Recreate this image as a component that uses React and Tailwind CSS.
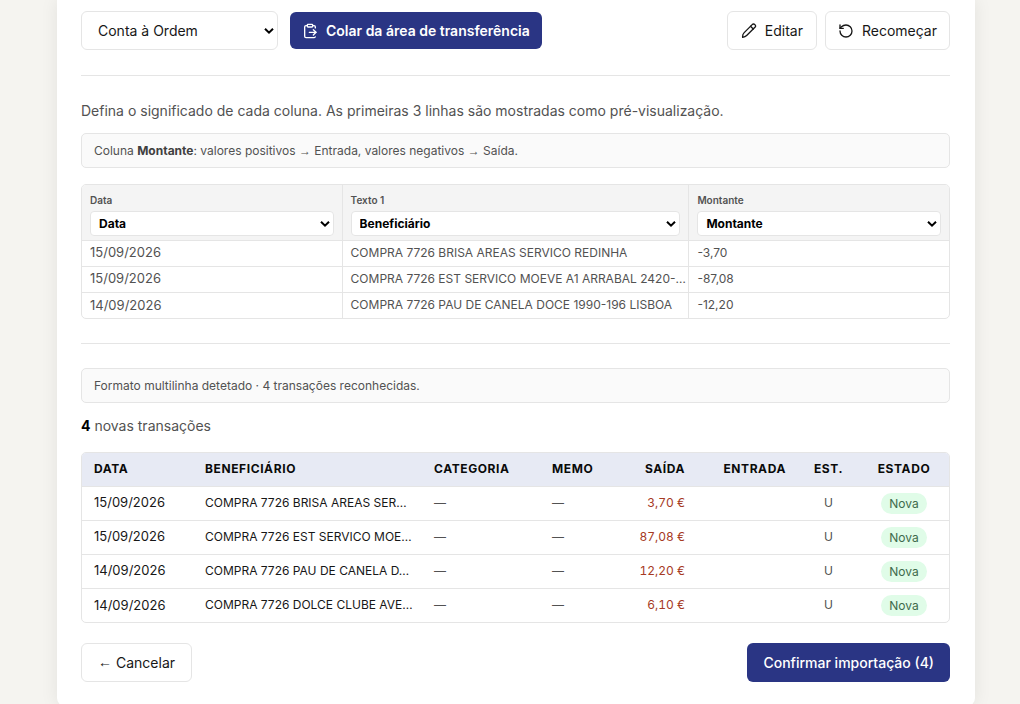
import React, { useState } from 'react';
import { ClipboardPaste, RotateCcw } from 'lucide-react';

const colunas = [
  { id: 'data', nome: 'Data', tipo: 'Data', largura: 'w-[30%]' },
  { id: 'texto1', nome: 'Texto 1', tipo: 'Beneficiário', largura: 'w-[40%]' },
  { id: 'montante', nome: 'Montante', tipo: 'Montante', largura: 'w-[30%]' },
];

const tiposColuna = ['Ignorar', 'Data', 'Beneficiário', 'Memo', 'Montante'];

const linhas = [
  ['15/09/2026', 'COMPRA 7726 BRISA AREAS SERVICO REDINHA', '-3,70'],
  ['15/09/2026', 'COMPRA 7726 EST SERVICO MOEVE A1 ARRABAL 2420-…', '-87,08'],
  ['14/09/2026', 'COMPRA 7726 PAU DE CANELA DOCE 1990-196 LISBOA', '-12,20'],
];

const transacoes = [
  { id: 1, data: '15/09/2026', beneficiario: 'COMPRA 7726 BRISA AREAS SER…', saida: '3,70 €' },
  { id: 2, data: '15/09/2026', beneficiario: 'COMPRA 7726 EST SERVICO MOE…', saida: '87,08 €' },
  { id: 3, data: '14/09/2026', beneficiario: 'COMPRA 7726 PAU DE CANELA D…', saida: '12,20 €' },
  { id: 4, data: '14/09/2026', beneficiario: 'COMPRA 7726 DOLCE CLUBE AVE…', saida: '6,10 €' },
];

const botaoSecundario =
  'flex h-[39px] items-center justify-center rounded-md border border-[#e5e5e5] bg-white text-[14px] text-[#171717] hover:bg-gray-50';

function IconeLapis() {
  return (
    <svg
      className="h-4 w-4"
      viewBox="0 0 24 24"
      fill="none"
      stroke="currentColor"
      strokeWidth="2"
      strokeLinecap="round"
      strokeLinejoin="round"
      aria-hidden="true"
    >
      <path d="M2.500 21.500c-.4-2.800.5-5.300 2.300-7.100l12-12a2.900 2.900 0 0 1 4.100 4.100l-12 12c-1.700 1.700-3.900 2.800-6.400 3Z" />
      <path d="m14.300 4.900 4.100 4.100" />
    </svg>
  );
}

function Seta({ className }) {
  return (
    <svg
      className={`pointer-events-none absolute top-1/2 h-[7px] w-[10px] -translate-y-1/2 ${className}`}
      viewBox="0 0 10 7"
      fill="none"
      stroke="currentColor"
      strokeWidth="2"
      aria-hidden="true"
    >
      <path d="M1 1.200 5 5.200 9 1.200" />
    </svg>
  );
}

function Aviso({ children }) {
  return (
    <div className="flex h-[35px] items-center rounded-[5px] border border-[#e5e5e5] bg-[#fafafa] px-3 text-[12px] text-[#525252]">
      <p>{children}</p>
    </div>
  );
}

function TabelaColunas() {
  const [tipos, setTipos] = useState(() => colunas.map((coluna) => coluna.tipo));

  const handleTipo = (indice, valor) => {
    setTipos(tipos.map((tipo, i) => (i === indice ? valor : tipo)));
  };

  return (
    <div className="mt-4 overflow-hidden rounded-[5px] border border-[#e5e5e5]">
      <table className="w-full table-fixed border-collapse">
        <thead className="bg-[#f4f4f4]">
          <tr>
            {colunas.map((coluna, i) => (
              <th
                key={coluna.id}
                className={`${coluna.largura} h-[55px] border-r border-[#e5e5e5] px-2 pt-1 text-left last:border-r-0`}
              >
                <label htmlFor={coluna.id} className="block text-[10px] leading-4 font-semibold text-[#525252]">
                  {coluna.nome}
                </label>
                <div className="relative mt-[3px]">
                  <select
                    id={coluna.id}
                    value={tipos[i]}
                    onChange={(e) => handleTipo(i, e.target.value)}
                    className="block h-[25px] w-full appearance-none rounded border border-[#e5e5e5] bg-white pr-5 pl-2 text-[12px] font-bold text-black"
                  >
                    {tiposColuna.map((tipo) => (
                      <option key={tipo}>{tipo}</option>
                    ))}
                  </select>
                  <Seta className="right-1" />
                </div>
              </th>
            ))}
          </tr>
        </thead>
        <tbody>
          {linhas.map(([data, texto, montante], i) => (
            <tr key={i} className="h-[26px] border-t border-[#e5e5e5] text-[12px] whitespace-nowrap text-[#525252]">
              <td className="border-r border-[#e5e5e5] px-2 text-[13px]">{data}</td>
              <td className="border-r border-[#e5e5e5] pl-2">{texto}</td>
              <td className="px-2">{montante}</td>
            </tr>
          ))}
        </tbody>
      </table>
    </div>
  );
}

function TabelaTransacoes() {
  return (
    <div className="mt-4 overflow-hidden rounded-[5px] border border-[#e5e5e5]">
      <table className="w-full table-fixed border-collapse text-left text-[12px] text-[#171717]">
        <thead className="bg-[#e7eaf4] tracking-wider text-[#0a0a0a] uppercase">
          <tr className="h-[33px]">
            <th className="w-[111px] px-3 font-bold">Data</th>
            <th className="w-[229px] px-3 font-bold">Beneficiário</th>
            <th className="w-[118px] px-3 font-bold">Categoria</th>
            <th className="w-[76px] px-3 font-bold">Memo</th>
            <th className="w-[81px] px-3 text-right font-bold">Saída</th>
            <th className="w-[101px] px-3 text-right font-bold">Entrada</th>
            <th className="w-[61px] px-3 text-center font-bold">Est.</th>
            <th className="w-[90px] px-3 text-center font-bold">Estado</th>
          </tr>
        </thead>
        <tbody>
          {transacoes.map((transacao) => (
            <tr key={transacao.id} className="h-[34px] border-t border-[#e5e5e5] whitespace-nowrap">
              <td className="px-3 text-[13px]">{transacao.data}</td>
              <td className="pl-3">{transacao.beneficiario}</td>
              <td className="px-3 text-[#525252]">—</td>
              <td className="px-3 text-[#525252]">—</td>
              <td className="px-3 text-right text-[#a63a24] tabular-nums">{transacao.saida}</td>
              <td className="px-3" />
              <td className="px-3 text-center text-[#525252]">U</td>
              <td className="px-3">
                <div className="flex justify-center">
                  <span className="rounded-full bg-[#e0fce8] px-2 leading-[21px] text-[#3f6b4c]">Nova</span>
                </div>
              </td>
            </tr>
          ))}
        </tbody>
      </table>
    </div>
  );
}

function App() {
  const [conta, setConta] = useState('Conta à Ordem');

  return (
    <div className="min-h-screen bg-[#f5f4f0] pr-[45px] pl-[57px] font-['Inter','Liberation_Sans',sans-serif]">
      <main className="rounded-b-lg bg-white pt-[11px] pr-[25px] pb-6 pl-6 shadow-[0_0_18px_rgba(0,0,0,0.08)]">
        <div className="flex items-center justify-between border-b border-[#e5e5e5] pb-[25px]">
          <div className="flex items-center gap-3">
            <div className="relative">
              <select
                aria-label="Conta"
                value={conta}
                onChange={(e) => setConta(e.target.value)}
                className="block h-[39px] w-[197px] appearance-none rounded-md border border-[#e5e5e5] bg-white pl-4 text-[14px] text-[#171717]"
              >
                <option>Conta à Ordem</option>
                <option>Conta Poupança</option>
              </select>
              <Seta className="right-1" />
            </div>
            <button
              type="button"
              className="flex h-[37px] items-center gap-2 rounded-md bg-[#2a3584] px-3 text-[14px] font-semibold text-white"
            >
              <ClipboardPaste className="h-4 w-4" />
              Colar da área de transferência
            </button>
          </div>
          <div className="flex items-center gap-2">
            <button type="button" className={`${botaoSecundario} min-w-[90px] gap-2 px-3`}>
              <IconeLapis />
              Editar
            </button>
            <button type="button" className={`${botaoSecundario} gap-2 px-3`}>
              <RotateCcw className="h-4 w-4" />
              Recomeçar
            </button>
          </div>
        </div>

        <section className="border-b border-[#e5e5e5] pt-[25px] pb-6">
          <p className="mb-3 text-[14px] leading-5 text-[#525252]">
            Defina o significado de cada coluna. As primeiras 3 linhas são mostradas como pré-visualização.
          </p>
          <Aviso>
            Coluna <strong className="font-bold text-[#404040]">Montante</strong>: valores positivos{' '}
            <span className="font-['Liberation_Sans',sans-serif]">→</span> Entrada, valores negativos{' '}
            <span className="font-['Liberation_Sans',sans-serif]">→</span> Saída.
          </Aviso>
          <TabelaColunas />
        </section>

        <section className="pt-6">
          <Aviso>Formato multilinha detetado · 4 transações reconhecidas.</Aviso>
          <p className="mt-[13px] text-[14px] leading-5 text-[#525252]">
            <strong className="font-bold text-black">4</strong> novas transações
          </p>
          <TabelaTransacoes />
        </section>

        <div className="mt-5 flex items-center justify-between">
          <button type="button" className={`${botaoSecundario} gap-1 px-4`}>
            <span className="font-['Liberation_Sans',sans-serif]">←</span>
            Cancelar
          </button>
          <button
            type="button"
            className="h-[39px] rounded-md bg-[#2a3584] px-4 text-[14px] font-medium text-white"
          >
            Confirmar importação (4)
          </button>
        </div>
      </main>
    </div>
  );
}

export default App;
